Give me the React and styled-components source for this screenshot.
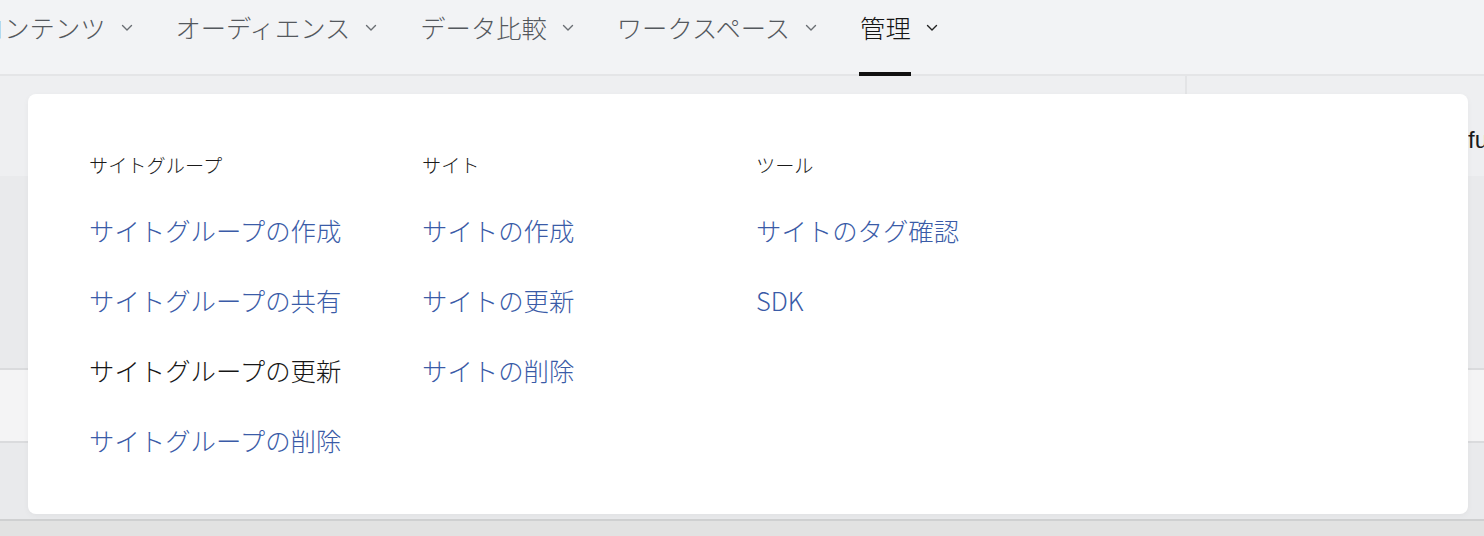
import React from 'react'
import styled, { createGlobalStyle } from 'styled-components'

const GlobalStyle = createGlobalStyle`
  html, body {
    margin: 0;
    padding: 0;
    background: #e2e2e2;
  }
  body {
    font-family: "Noto Sans CJK JP", "Noto Sans", sans-serif;
  }
`

const Screen = styled.div`
  position: relative;
  width: 1484px;
  height: 536px;
  overflow: hidden;
  background: #e2e2e2;
`

const NavBar = styled.nav`
  display: flex;
  align-items: stretch;
  height: 74px;
  background: #f2f3f5;
  border-bottom: 2px solid #e4e5e7;
`

const NavList = styled.div`
  display: flex;
  gap: 43px;
  margin-left: -21px;
`

const NavItem = styled.div`
  position: relative;
  display: flex;
  align-items: flex-start;
  gap: 15px;
  padding-top: 9px;
  font-size: 25.3px;
  font-weight: 300;
  line-height: 36px;
  color: ${p => (p.active ? '#151515' : '#54585d')};
  white-space: nowrap;
`

const NavLabel = styled.span`
  position: relative;
  display: block;
  height: 65px;

  &::after {
    content: '';
    display: ${p => (p.active ? 'block' : 'none')};
    position: absolute;
    left: -1px;
    right: 0;
    bottom: -2px;
    height: 4px;
    background: #111;
  }
`

const Chevron = styled.svg`
  width: 12px;
  height: 8px;
  margin-top: 15px;
  flex-shrink: 0;
`

const TopRow = styled.div`
  display: flex;
  height: 100px;
  background: #eeeff1;
`

const LeftPane = styled.div`
  width: 1187px;
  flex-shrink: 0;
  box-sizing: border-box;
  border-right: 2px solid #e3e4e6;
`

const RightPane = styled.div`
  flex: 1;
  padding: 47px 0 0 281px;
  font-size: 24px;
  line-height: 34px;
  color: #1b1b1b;
  font-family: "Liberation Sans", "Noto Sans", sans-serif;
  white-space: nowrap;
  overflow: hidden;
`

const Band = styled.div`
  height: ${p => p.h}px;
  background: ${p => p.bg};
  border-bottom: ${p => (p.line ? `2px solid ${p.line}` : 'none')};
`

const Dropdown = styled.div`
  position: absolute;
  left: 28px;
  top: 94px;
  width: 1440px;
  height: 420px;
  box-sizing: border-box;
  padding: 57px 0 0 61px;
  background: #ffffff;
  border-radius: 8px;
  box-shadow: 0 2px 6px rgba(0, 0, 0, 0.04);
  display: grid;
  grid-template-columns: 333px 334px 333px;
  align-content: start;
`

const Column = styled.div`
  display: flex;
  flex-direction: column;
`

const Heading = styled.div`
  font-size: 19.2px;
  font-weight: 300;
  line-height: 28px;
  color: #1a1a1a;
  margin-bottom: 34px;
  white-space: nowrap;
`

const MenuLink = styled.a`
  display: block;
  font-size: 25.4px;
  font-weight: 300;
  line-height: 34px;
  height: 34px;
  margin-bottom: 36px;
  color: ${p => (p.hover ? '#161616' : '#3a5ba7')};
  text-decoration: none;
  white-space: nowrap;
  cursor: pointer;
`

const navItems = [
  { label: 'コンテンツ' },
  { label: 'オーディエンス' },
  { label: 'データ比較' },
  { label: 'ワークスペース' },
  { label: '管理', active: true },
]

const columns = [
  {
    title: 'サイトグループ',
    links: ['サイトグループの作成', 'サイトグループの共有', 'サイトグループの更新', 'サイトグループの削除'],
    hover: 2,
  },
  {
    title: 'サイト',
    links: ['サイトの作成', 'サイトの更新', 'サイトの削除'],
  },
  {
    title: 'ツール',
    links: ['サイトのタグ確認', 'SDK'],
  },
]

const ChevronDown = ({ color }) => (
  <Chevron viewBox="0 0 12 8">
    <path d="M1.5 1.5 L6 6 L10.5 1.5" fill="none" stroke={color} strokeWidth="1.4" strokeLinecap="round" strokeLinejoin="round" />
  </Chevron>
)

export default function App() {
  return (
    <Screen>
      <GlobalStyle />
      <NavBar>
        <NavList>
          {navItems.map(item => (
            <NavItem key={item.label} active={item.active}>
              <NavLabel active={item.active}>{item.label}</NavLabel>
              <ChevronDown color={item.active ? '#222' : '#6a6e73'} />
            </NavItem>
          ))}
        </NavList>
      </NavBar>

      <TopRow>
        <LeftPane />
        <RightPane>fu</RightPane>
      </TopRow>
      <Band h={192} bg="#e9eaec" line="#dadbdd" />
      <Band h={71} bg="#f4f4f5" line="#dadbdd" />
      <Band h={76} bg="#e9eaec" line="#cfd0d1" />

      <Dropdown>
        {columns.map(col => (
          <Column key={col.title}>
            <Heading>{col.title}</Heading>
            {col.links.map((link, i) => (
              <MenuLink key={link} hover={col.hover === i}>{link}</MenuLink>
            ))}
          </Column>
        ))}
      </Dropdown>
    </Screen>
  )
}
